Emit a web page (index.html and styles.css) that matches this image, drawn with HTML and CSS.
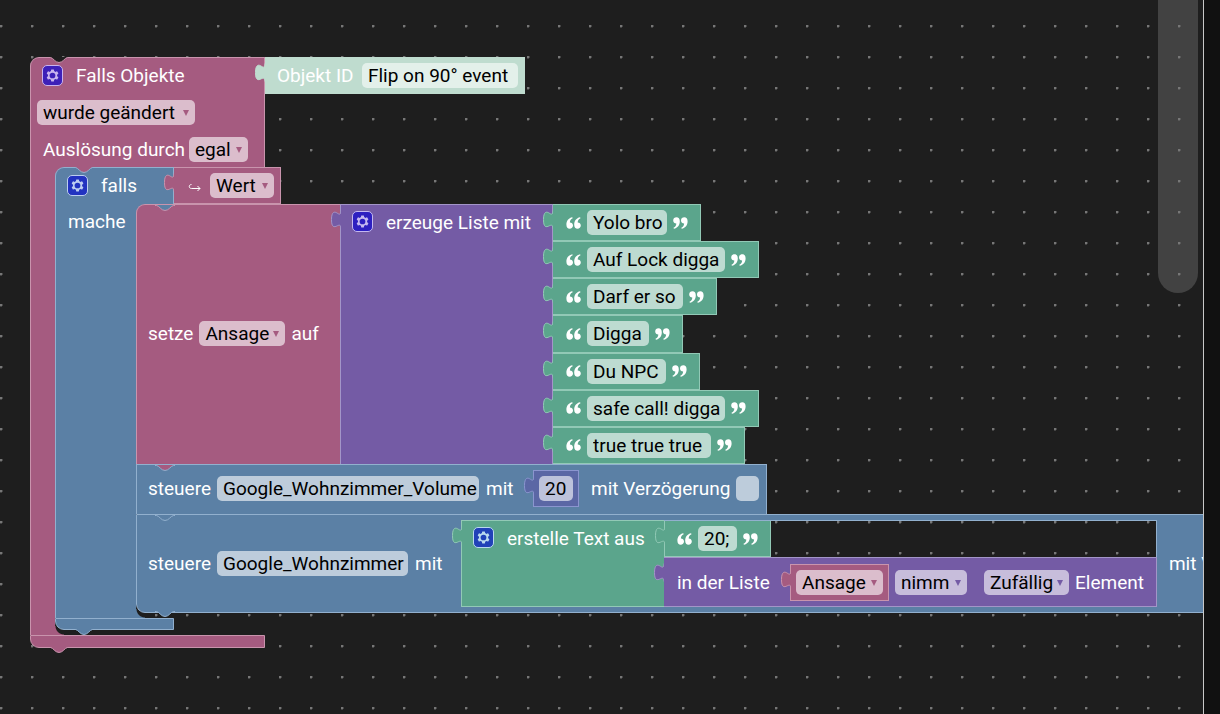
FILE: index.html
```html
<!DOCTYPE html>
<html lang="de">
<head>
<meta charset="utf-8">
<title>Blockly</title>
<link rel="stylesheet" href="styles.css">
</head>
<body>
<svg class="defs" aria-hidden="true">
  <symbol id="gear" viewBox="0 0 16 16">
    <path fill="currentColor" d="m4.203,7.296 0,1.368 -0.92,0.677 -0.11,0.41 0.9,1.59 0.41,0.11 1.043,-0.457 1.187,0.683 0.127,1.134 0.3,0.3 1.8,0 0.3,-0.299 0.127,-1.138 1.185,-0.682 1.046,0.458 0.409,-0.11 0.9,-1.59 -0.11,-0.41 -0.92,-0.677 0,-1.366 0.92,-0.677 0.11,-0.41 -0.9,-1.591 -0.409,-0.109 -1.046,0.458 -1.185,-0.682 -0.127,-1.138 -0.3,-0.299 -1.8,0 -0.3,0.3 -0.126,1.135 -1.187,0.682 -1.043,-0.457 -0.41,0.11 -0.899,1.59 0.108,0.409z"/>
    <circle class="gear-hole" cx="8" cy="8" r="2.4"/>
  </symbol>
  <symbol id="tab" viewBox="0 0 10 19">
    <path d="M10 .5C10 4.500 8.500 4.800 6.500 3.300C3.500 1.200 .5 1.500 .5 9.500C.5 17.500 3 17.500 6.500 15.700C8.500 14.700 10 15 10 18.500"/>
  </symbol>
  <symbol id="notch" viewBox="0 0 20 6">
    <path class="notch-fill" d="M0 0H20L18.500 .5C15.500 1 14.500 5.500 10 5.500S4.500 1 1.500 .5Z"/>
    <path class="notch-line" d="M0 .5H1.500C4.500 1 6 5.500 10 5.500S15.500 1 18.500 .5H20"/>
  </symbol>
  <symbol id="quote" viewBox="0 0 15 12">
    <path fill="#fff" d="M6.300 .3C2.600 1 .4 3.900 .4 7.800C.4 10.300 1.700 11.800 3.700 11.800C5.500 11.800 7 10.600 7 8.600C7 6.700 5.600 5.600 3.900 5.600C3.900 3.700 4.700 2.300 6.700 1.300Z"/>
    <path fill="#fff" d="M14.100 .3C10.400 1 8.200 3.900 8.200 7.800C8.200 10.300 9.500 11.800 11.500 11.800C13.300 11.800 14.800 10.600 14.800 8.600C14.800 6.700 13.400 5.600 11.700 5.600C11.700 3.700 12.500 2.300 14.500 1.300Z"/>
  </symbol>
</svg>

<main class="workspace">
  <section class="c-block event pink">
    <svg class="notch from-canvas"><use href="#notch"/></svg>
    <div class="line">
      <div class="event-head top">
        <button class="gear" aria-label="Einstellungen"><svg><use href="#gear"/></svg></button>
        <span class="after-gear">Falls Objekte</span>
      </div>
      <div class="value mint">
        <svg class="tab"><use href="#tab"/></svg>
        <label class="oid-label" for="oid">Objekt ID</label>
        <input id="oid" class="field w-oid" value="Flip on 90° event">
      </div>
    </div>
    <div class="event-head tight">
      <span class="drop w-changed"><select aria-label="Bedingung"><option>wurde geändert</option></select></span>
    </div>
    <div class="event-head last">
      <label class="ack-label" for="ack">Auslösung durch</label>
      <span class="drop w-any"><select id="ack"><option>egal</option></select></span>
    </div>

    <div class="event-body">
      <section class="c-block blue">
        <svg class="notch from-pink"><use href="#notch"/></svg>
        <div class="line">
          <div class="if-head">
            <button class="gear" aria-label="Einstellungen"><svg><use href="#gear"/></svg></button>
            <span class="after-gear">falls</span>
          </div>
          <div class="value pink">
            <svg class="tab"><use href="#tab"/></svg>
            <svg class="hook" viewBox="0 0 14 9" aria-hidden="true"><path d="M3.500 1.500C.5 1.500 .5 5.500 3.500 5.500H12M9.500 3L12 5.500L9.500 8"/></svg>
            <span class="drop w-value"><select aria-label="Eigenschaft"><option>Wert</option></select></span>
          </div>
        </div>

        <div class="line">
          <div class="do-side">mache</div>
          <div class="stack">
            <section class="line">
              <div class="set-block pink">
                <svg class="notch from-blue"><use href="#notch"/></svg>
                <label for="var">setze</label>
                <span class="drop w-var"><select id="var"><option>Ansage</option></select></span>
                <span>auf</span>
              </div>
              <div class="list-head purple">
                <svg class="tab"><use href="#tab"/></svg>
                <button class="gear" aria-label="Einstellungen"><svg><use href="#gear"/></svg></button>
                <span class="after-gear">erzeuge Liste mit</span>
              </div>
              <div class="list-items">
                <div class="value green text"><svg class="tab"><use href="#tab"/></svg><svg class="quote"><use href="#quote"/></svg><input class="field w-t1" aria-label="Text 1" value="Yolo bro"><svg class="quote end"><use href="#quote"/></svg></div>
                <div class="value green text"><svg class="tab"><use href="#tab"/></svg><svg class="quote"><use href="#quote"/></svg><input class="field w-t2" aria-label="Text 2" value="Auf Lock digga"><svg class="quote end"><use href="#quote"/></svg></div>
                <div class="value green text"><svg class="tab"><use href="#tab"/></svg><svg class="quote"><use href="#quote"/></svg><input class="field w-t3" aria-label="Text 3" value="Darf er so"><svg class="quote end"><use href="#quote"/></svg></div>
                <div class="value green text"><svg class="tab"><use href="#tab"/></svg><svg class="quote"><use href="#quote"/></svg><input class="field w-t4" aria-label="Text 4" value="Digga"><svg class="quote end"><use href="#quote"/></svg></div>
                <div class="value green text"><svg class="tab"><use href="#tab"/></svg><svg class="quote"><use href="#quote"/></svg><input class="field w-t5" aria-label="Text 5" value="Du NPC"><svg class="quote end"><use href="#quote"/></svg></div>
                <div class="value green text"><svg class="tab"><use href="#tab"/></svg><svg class="quote"><use href="#quote"/></svg><input class="field w-t2" aria-label="Text 6" value="safe call! digga"><svg class="quote end"><use href="#quote"/></svg></div>
                <div class="value green text"><svg class="tab"><use href="#tab"/></svg><svg class="quote"><use href="#quote"/></svg><input class="field w-t7" aria-label="Text 7" value="true true true"><svg class="quote end"><use href="#quote"/></svg></div>
              </div>
            </section>

            <section class="control blue">
              <svg class="notch from-pink"><use href="#notch"/></svg>
              <label class="verb" for="dev1">steuere</label>
              <input id="dev1" class="field w-dev1" value="Google_Wohnzimmer_Volume">
              <label class="with" for="num">mit</label>
              <div class="value indigo inset number">
                <svg class="tab"><use href="#tab"/></svg>
                <input id="num" class="field w-num" value="20">
              </div>
              <label class="delay" for="delay1">mit Verzögerung</label>
              <input id="delay1" class="check" type="checkbox">
            </section>

            <section class="control last blue">
              <svg class="notch from-blue"><use href="#notch"/></svg>
              <svg class="notch below"><use href="#notch"/></svg>
              <label class="verb" for="dev2">steuere</label>
              <input id="dev2" class="field w-dev2" value="Google_Wohnzimmer">
              <span class="with wide">mit</span>
              <div class="join">
                <div class="join-head green">
                  <svg class="tab"><use href="#tab"/></svg>
                  <button class="gear" aria-label="Einstellungen"><svg><use href="#gear"/></svg></button>
                  <span class="after-gear">erstelle Text aus</span>
                </div>
                <div class="join-items">
                  <div class="hole">
                    <div class="value green text"><svg class="tab"><use href="#tab"/></svg><svg class="quote"><use href="#quote"/></svg><input class="field w-t8" aria-label="Text" value="20;"><svg class="quote end"><use href="#quote"/></svg></div>
                  </div>
                  <div class="value purple pick">
                    <svg class="tab"><use href="#tab"/></svg>
                    <label class="in-list" for="list">in der Liste</label>
                    <div class="value pink inset variable">
                      <svg class="tab"><use href="#tab"/></svg>
                      <span class="drop w-list"><select id="list"><option>Ansage</option></select></span>
                    </div>
                    <span class="drop w-take"><select aria-label="Aktion"><option>nimm</option></select></span>
                    <span class="drop w-rand"><select id="pos"><option>Zufällig</option></select></span>
                    <label for="pos">Element</label>
                  </div>
                </div>
              </div>
              <label class="delay" for="delay2">mit Verzögerung</label>
              <input id="delay2" class="check" type="checkbox">
            </section>
          </div>
        </div>
        <div class="if-foot"></div>
        <svg class="notch below"><use href="#notch"/></svg>
      </section>
    </div>
    <div class="event-foot"></div>
    <svg class="notch below"><use href="#notch"/></svg>
  </section>
  <div class="scrollbar"></div>
</main>
<aside class="edge"></aside>
</body>
</html>
```
FILE: styles.css
```css
* { box-sizing: border-box; }
body {
  margin: 0;
  height: 100vh;
  overflow: hidden;
  display: grid;
  grid-template-columns: minmax(0, 1fr) 17px;
  background: #1e1e1e;
  color: #fff;
  font: 19px/25px Roboto, "Noto Sans", sans-serif;
  white-space: nowrap;
}
.defs { position: absolute; width: 0; height: 0; }

.workspace, .hole {
  background: #1e1e1e linear-gradient(#777, #777) 0 0 / 31px 31px fixed;
  background: #1e1e1e radial-gradient(circle at 1px 1px, #777 1px, transparent 2px) 0 25px / 31px 31px fixed;
}
.workspace { position: relative; overflow: hidden; padding: 57px 0 0 30px; }
.edge { background: #111; border-left: 1px solid #c8c8c8; }
.scrollbar {
  position: absolute;
  top: 0;
  right: 5px;
  width: 40px;
  height: 293px;
  border-radius: 0 0 20px 20px;
  background: rgba(119, 119, 119, .4);
}

/* block colours */
.pink { --c: #a55b80; --s: #c994ad; --f: #dbbdcc; --g: #3d20b8; --i: #c9b3ee; }
.blue { --c: #5b80a5; --s: #92b0ce; --f: #bdccdb; --g: #2233c0; --i: #bccdf0; }
.purple { --c: #745ba5; --s: #a395c8; --f: #c7bddb; --g: #2d1fc0; --i: #c4b8f0; }
.green { --c: #5ba58c; --s: #92c9b6; --f: #bddbd1; --g: #2141b8; --i: #b9d8ee; }
.indigo { --c: #5b67a5; --s: #8b95cf; --f: #bdc2db; }
.mint { --c: #bfdccf; --s: #bfdccf; --f: #e3f0ea; }

.c-block { position: relative; }
.line { display: flex; }
.line > *, .value > *, .control > * { flex: none; }

/* connectors */
.tab { position: absolute; left: -10px; top: 5px; width: 10px; height: 19px; fill: var(--c); stroke: var(--s); stroke-width: 1; }
.notch { position: absolute; z-index: 1; left: 18px; top: 0; width: 20px; height: 6px; }
.c-block > .notch { left: 19px; }
.notch.below { top: calc(100% - 1px); }
.notch-line { fill: none; stroke: var(--s); }
.notch-fill { fill: var(--n, var(--c)); }
.from-canvas { --n: #1e1e1e; }
.from-pink { --n: #a55b80; }
.from-blue { --n: #5b80a5; }

/* fields */
.field, .drop select {
  display: block;
  height: 25px;
  margin: 0;
  padding: 0 0 0 6px;
  border: 0;
  border-radius: 5px;
  background: var(--f);
  color: #000;
  font: inherit;
}
.drop { position: relative; }
.drop select { width: 100%; appearance: none; }
.drop::after {
  content: "";
  position: absolute;
  right: 6px;
  top: 10px;
  border: 3px solid transparent;
  border-top: 6px solid var(--c);
  border-bottom: 0;
  pointer-events: none;
}
.check {
  appearance: none;
  width: 23px;
  height: 25px;
  margin: 0;
  border-radius: 5px;
  background: var(--f);
}
.gear {
  width: 21px;
  height: 21px;
  padding: 0;
  border: 1px solid var(--i);
  border-radius: 5px;
  background: var(--g);
  color: var(--i);
}
.gear svg { display: block; width: 19px; height: 19px; }
.gear-hole { fill: var(--g); }
.after-gear { margin-left: 13px; }

.w-oid { width: 156px; }
.w-changed { width: 158px; }
.w-any { width: 59px; }
.w-value { width: 64px; }
.w-var { width: 86px; }
.w-t1 { width: 80px; }
.w-t2 { width: 138px; }
.w-t3 { width: 96px; }
.w-t4 { width: 62px; }
.w-t5 { width: 79px; }
.w-t7 { width: 124px; }
.w-t8 { width: 39px; }
.w-dev1 { width: 262px; }
.w-dev2 { width: 191px; }
.w-num { width: 34px; }
.w-list { width: 87px; }
.w-take { width: 72px; }
.w-rand { width: 85px; }

/* value blocks */
.value {
  position: relative;
  display: flex;
  align-items: center;
  gap: 6px;
  width: max-content;
  height: 37px;
  padding: 0 6px 0 12px;
  border: 1px solid var(--s);
  border-left-width: 0;
  background: var(--c);
}
.value.inset { border-left-width: 1px; padding: 0 5px; }
.value.text { padding: 0 12px 0 13px; }
.value.text .quote { width: 15px; height: 12px; }
.value.text .end { transform: rotate(180deg); }
.hook { width: 14px; height: 9px; margin: 4px 2px 0 2px; fill: none; stroke: #fff; }
.oid-label { width: 79px; }

/* event block */
.event-head {
  display: flex;
  align-items: center;
  gap: 6px;
  width: 235px;
  height: 37px;
  padding-left: 12px;
  border: solid var(--s);
  border-width: 0 1px;
  background: var(--c);
}
.event-head.top { border-top-width: 1px; border-top-left-radius: 9px; gap: 0; padding: 0 0 2px 11px; }
.event-head.tight { padding-left: 6px; }
.event-head.last { height: 36px; }
.ack-label { width: 140px; }
.event-body {
  position: relative;
  padding: 0 0 5px 25px;
  background: linear-gradient(90deg, var(--s) 1px, var(--c) 1px) 0 0 / 25px 100% no-repeat;
}
.event-body::before, .stack::before {
  content: "";
  position: absolute;
  width: 9px;
  height: 9px;
  background: var(--c);
}
.event-body::before { left: 25px; top: 0; }
.event-body::after, .stack::after {
  content: "";
  position: absolute;
  width: 9px;
  height: 9px;
  bottom: 0;
  background: radial-gradient(circle at 100% 0, transparent 8px, var(--c) 9px);
}
.event-body::after { left: 25px; }
.event-foot, .if-foot { border: 1px solid var(--s); background: var(--c); border-bottom-left-radius: 9px; }
.event-foot { width: 235px; height: 13px; }

/* if block */
.if-head {
  display: flex;
  align-items: center;
  width: 119px;
  height: 37px;
  padding: 0 0 2px 11px;
  border: solid var(--s);
  border-width: 1px 1px 0 1px;
  border-top-left-radius: 9px;
  background: var(--c);
}
.do-side {
  width: 81px;
  padding: 5px 0 0 12px;
  border-left: 1px solid var(--s);
  background: var(--c);
}
.if-foot { width: 119px; height: 12px; }

.stack { position: relative; padding-bottom: 5px; }
.stack::before, .stack::after { left: 0; }
.set-block {
  position: relative;
  display: flex;
  align-items: center;
  gap: 6px;
  width: 204px;
  padding: 0 0 2px 11px;
  border: solid var(--s);
  border-width: 1px 0 0 1px;
  border-top-left-radius: 9px;
  background: var(--c);
}
.list-head {
  position: relative;
  display: flex;
  align-items: start;
  width: 213px;
  padding: 5px 0 0 11px;
  border: solid var(--s);
  border-width: 1px 1px 0 1px;
  background: var(--c);
}
.list-head .gear, .join-head .gear { margin-top: 1px; }
.list-items { display: flex; flex-direction: column; min-height: 260px; }
.list-items .value { flex: auto; }

.control {
  position: relative;
  display: flex;
  align-items: center;
  width: max-content;
  min-height: 50px;
  padding: 0 7px 2px 11px;
  border: solid var(--s);
  border-width: 1px 1px 0 1px;
  background: var(--c);
}
.control.last { padding-top: 5px; padding-bottom: 5px; border-bottom-width: 1px; border-bottom-left-radius: 9px; }
.verb { width: 69px; }
.with { width: 47px; margin-left: 7px; }
.with.wide { width: 46px; }
.delay { width: 145px; margin-left: 12px; }

.join { display: flex; }
.join-head {
  position: relative;
  display: flex;
  align-items: start;
  width: 203px;
  padding: 5px 0 0 11px;
  border: solid var(--s);
  border-width: 1px 0 1px 1px;
  background: var(--c);
}
.hole { border: solid #92b0ce; border-width: 1px 1px 0 0; }
.hole .value { height: 36px; border-top: 0; border-left-width: 1px; padding-left: 12px; }
.pick { height: 50px; padding: 0 12px 0 13px; }
.pick > .drop + .drop { margin-left: 11px; }
.in-list { width: 107px; }
```
